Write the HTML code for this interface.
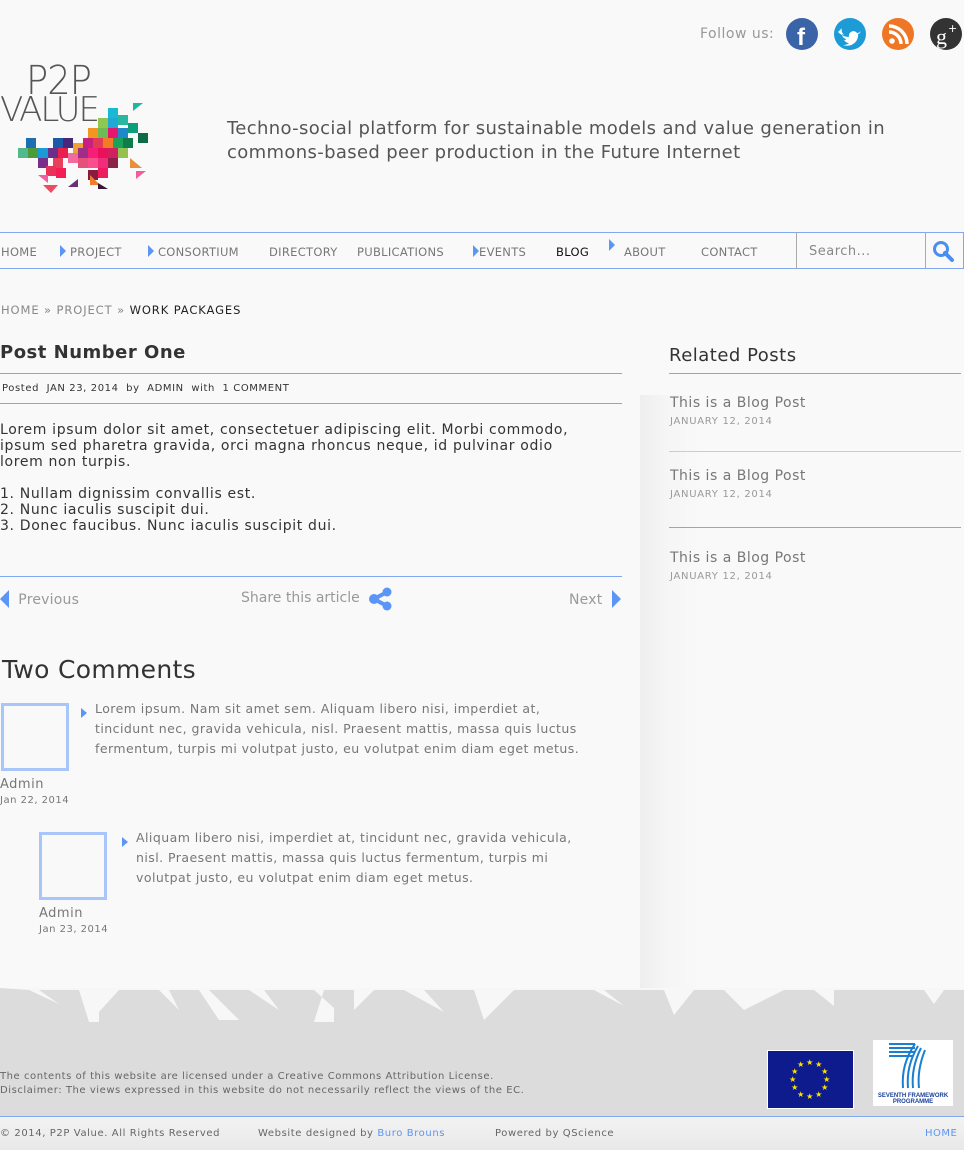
<!DOCTYPE html>
<html><head><meta charset="utf-8"><style>
*{margin:0;padding:0;box-sizing:border-box}
body{width:964px;height:1150px;background:#f9f9f9;font-family:"DejaVu Sans",Verdana,sans-serif;color:#444;position:relative;overflow:hidden;letter-spacing:.5px}
.a{position:absolute;white-space:nowrap}
.nav{font-size:11.5px;color:#777;top:245px;letter-spacing:.3px}
.tri{display:inline-block;width:0;height:0;border-top:6px solid transparent;border-bottom:6px solid transparent;border-left:6px solid #5b95f5}
.hr{position:absolute;height:1px;background:#7fa8f0}
</style></head><body>
<div class="a" style="left:640px;top:395px;width:324px;height:600px;background:linear-gradient(90deg,#eeeeee 0,#f5f5f5 25px,#f9f9f9 60px)"></div>

<div class="a" style="left:700px;top:26px;font-size:14px;color:#999">Follow us:</div>
<svg class="a" style="left:785px;top:17px" width="180" height="34">
<circle cx="17" cy="17" r="16" fill="#3b64a8"/><text x="12" y="28" font-size="24" font-weight="bold" fill="#fff" font-family="Liberation Sans">f</text>
<circle cx="65" cy="17" r="16" fill="#1d9bd7"/><path d="M53 13c3 3 7 5 11 5-1-5 5-8 8-4 2 0 3-1 4-2-1 2-2 3-3 3 1 7-6 14-15 11 3 0 5-1 6-2-3 0-4-2-5-3 1 0 2 0 2-1-3-1-4-3-4-5 1 1 2 1 2 1-2-2-3-5-2-7z" fill="#fff" transform="translate(0,2)"/>
<circle cx="113" cy="17" r="16" fill="#ee7624"/><circle cx="107" cy="24" r="2.8" fill="#fff"/><path d="M104 15a12 12 0 0 1 12 12M104 9a18 18 0 0 1 18 18" stroke="#fff" stroke-width="3.5" fill="none"/>
<circle cx="161" cy="17" r="16" fill="#333"/><text x="151" y="27" font-size="22" fill="#fff" font-family="Liberation Serif">g</text><text x="163" y="15" font-size="11" fill="#fff">+</text>
</svg>

<div class="a" style="left:26px;top:58px;font-size:40px;color:#555;font-family:'DejaVu Sans';font-weight:200;letter-spacing:-1px;transform:scaleX(.92);transform-origin:left">P2P</div>
<div class="a" style="left:0;top:90px;font-size:34px;color:#555;font-family:'DejaVu Sans';letter-spacing:-2px;font-weight:200">VALUE</div>
<svg class="a" style="left:18px;top:103px" width="150" height="92">
<g>
<rect x="90" y="5" width="10" height="10" fill="#1ab9d3"/><rect x="100" y="12" width="10" height="10" fill="#28b7a0"/><rect x="110" y="20" width="10" height="10" fill="#0a9f7a"/><rect x="80" y="15" width="10" height="10" fill="#8fc751"/><rect x="90" y="15" width="10" height="10" fill="#20a9d4"/>
<rect x="70" y="25" width="10" height="10" fill="#f39521"/><rect x="80" y="25" width="10" height="10" fill="#6cbb55"/><rect x="90" y="25" width="10" height="10" fill="#e4166f"/><rect x="100" y="25" width="10" height="10" fill="#1e88c8"/><rect x="120" y="30" width="10" height="10" fill="#0d6b46"/>
<rect x="8" y="35" width="10" height="10" fill="#1e6fb1"/><rect x="35" y="35" width="10" height="10" fill="#1a5aa8"/><rect x="45" y="35" width="10" height="10" fill="#46287a"/><rect x="55" y="40" width="10" height="10" fill="#f0a033"/><rect x="65" y="35" width="10" height="10" fill="#c8207e"/><rect x="75" y="35" width="10" height="10" fill="#e33b53"/><rect x="85" y="35" width="10" height="10" fill="#f47b26"/><rect x="95" y="35" width="10" height="10" fill="#1ba25a"/><rect x="105" y="35" width="10" height="10" fill="#0f7c49"/>
<rect x="0" y="45" width="10" height="10" fill="#52b98d"/><rect x="10" y="45" width="10" height="10" fill="#4b9b3b"/><rect x="20" y="45" width="10" height="10" fill="#1a9ad6"/><rect x="30" y="45" width="10" height="10" fill="#6b2f8a"/><rect x="40" y="45" width="10" height="10" fill="#ea1f4e"/><rect x="50" y="50" width="10" height="10" fill="#f56a9e"/><rect x="60" y="45" width="10" height="10" fill="#9f2e8b"/><rect x="70" y="45" width="10" height="10" fill="#f51e78"/><rect x="80" y="45" width="10" height="10" fill="#e8115a"/><rect x="90" y="45" width="10" height="10" fill="#d02060"/><rect x="100" y="45" width="10" height="10" fill="#95c151"/>
<rect x="20" y="55" width="10" height="10" fill="#7a2e8b"/><rect x="35" y="55" width="10" height="10" fill="#e93f5a"/><rect x="60" y="55" width="10" height="10" fill="#e55178"/><rect x="70" y="55" width="10" height="10" fill="#fa4f8e"/><rect x="80" y="55" width="10" height="10" fill="#f02d7a"/><rect x="90" y="55" width="10" height="10" fill="#8d2248"/>
<rect x="28" y="63" width="10" height="10" fill="#e9325a"/><rect x="38" y="65" width="10" height="10" fill="#f21e55"/><rect x="80" y="65" width="10" height="10" fill="#ee1c5f"/><rect x="70" y="67" width="10" height="10" fill="#8b1b3e"/>
<path d="M25 88h15l-7 8z" fill="#ea4e62" transform="translate(0,-6)"/><path d="M72 72l10 10h-10z" fill="#f07d2c"/><path d="M80 80l10 6h-10z" fill="#3a1633"/><path d="M20 72l10 0 0 8z" fill="#f0609a"/><path d="M112 55l12 10h-12z" fill="#e98f3c"/><path d="M118 68l10 0-10 8z" fill="#ef5f9a"/><path d="M50 84l10-8 0 8z" fill="#6b2f7a"/><path d="M115 0l10 0-10 8z" fill="#1ab9a0"/>
</g></svg>

<div class="a" style="left:227px;top:117px;font-size:18px;color:#555;line-height:24px;white-space:normal;width:700px;letter-spacing:.35px">Techno-social platform for sustainable models and value generation in commons-based peer production in the Future Internet</div>

<div class="hr" style="left:0;top:232px;width:964px"></div>
<div class="hr" style="left:0;top:268px;width:964px"></div>
<div class="a" style="left:796px;top:232px;width:1px;height:37px;background:#aaa"></div>
<div class="a" style="left:925px;top:232px;width:1px;height:37px;background:#aaa"></div>
<div class="a" style="left:963px;top:232px;width:1px;height:37px;background:#7fa8f0"></div>
<div class="a nav" style="left:1px">HOME</div>
<div class="a nav" style="left:60px"><span class="tri" style="vertical-align:-1px"></span> PROJECT</div>
<div class="a nav" style="left:148px"><span class="tri" style="vertical-align:-1px"></span> CONSORTIUM</div>
<div class="a nav" style="left:269px">DIRECTORY</div>
<div class="a nav" style="left:357px">PUBLICATIONS</div>
<div class="a nav" style="left:473px"><span class="tri" style="vertical-align:-1px"></span>EVENTS</div>
<div class="a nav" style="left:556px;color:#111">BLOG</div>
<div class="a" style="left:609px;top:236px"><span class="tri"></span></div>
<div class="a nav" style="left:624px">ABOUT</div>
<div class="a nav" style="left:701px">CONTACT</div>
<div class="a" style="left:809px;top:244px;font-size:13px;color:#888">Search...</div>
<svg class="a" style="left:932px;top:240px" width="24" height="24"><circle cx="9" cy="9" r="6.5" stroke="#4a8ef0" stroke-width="3" fill="none"/><path d="M13 13l7 7" stroke="#4a8ef0" stroke-width="4" stroke-linecap="round"/></svg>

<div class="a" style="left:1px;top:303px;font-size:11.5px;color:#888;letter-spacing:.9px">HOME » PROJECT » <span style="color:#222">WORK PACKAGES</span></div>

<div class="a" style="left:0;top:342px;font-size:18px;font-weight:bold;color:#333">Post Number One</div>
<div class="hr" style="left:0;top:373px;width:622px"></div>
<div class="a" style="left:2px;top:383px;font-size:10px;color:#333;letter-spacing:.6px">Posted &nbsp;JAN 23, 2014 &nbsp;by &nbsp;ADMIN &nbsp;with &nbsp;1 COMMENT</div>
<div class="hr" style="left:0;top:403px;width:622px"></div>
<div class="a" style="left:0;top:422px;font-size:14px;color:#333;line-height:16px;white-space:normal;width:600px;letter-spacing:.65px">Lorem ipsum dolor sit amet, consectetuer adipiscing elit. Morbi commodo, ipsum sed pharetra gravida, orci magna rhoncus neque, id pulvinar odio lorem non turpis.<br><br>1. Nullam dignissim convallis est.<br>2. Nunc iaculis suscipit dui.<br>3. Donec faucibus. Nunc iaculis suscipit dui.</div>

<div class="hr" style="left:0;top:576px;width:622px"></div>
<div class="a" style="left:0;top:590px;font-size:14px;color:#999;letter-spacing:.2px"><span class="tri" style="border-left:0;border-right:9px solid #5b95f5;border-top-width:9px;border-bottom-width:9px;vertical-align:-4px"></span> &nbsp;Previous</div>
<div class="a" style="left:241px;top:590px;font-size:14px;color:#999;letter-spacing:0">Share this article</div>
<svg class="a" style="left:369px;top:587px" width="25" height="25"><g fill="#5b95f5"><circle cx="5" cy="12" r="5"/><circle cx="18" cy="5" r="4.5"/><circle cx="18" cy="19" r="4.5"/></g><path d="M5 12L18 5M5 12l13 7" stroke="#5b95f5" stroke-width="4"/></svg>
<div class="a" style="left:569px;top:590px;font-size:14px;color:#999;letter-spacing:.2px">Next &nbsp;<span class="tri" style="border-left-width:9px;border-top-width:9px;border-bottom-width:9px;vertical-align:-4px"></span></div>

<div class="a" style="left:2px;top:655px;font-size:25px;color:#333;letter-spacing:.3px">Two Comments</div>
<div class="a" style="left:1px;top:703px;width:68px;height:68px;border:3px solid #a9c6fb"></div>
<div class="a" style="left:81px;top:703px"><span class="tri" style="border-left-width:6px;border-top-width:5px;border-bottom-width:5px"></span></div>
<div class="a" style="left:95px;top:699px;font-size:12.5px;color:#777;line-height:20px;white-space:normal;width:500px;letter-spacing:.45px">Lorem ipsum. Nam sit amet sem. Aliquam libero nisi, imperdiet at, tincidunt nec, gravida vehicula, nisl. Praesent mattis, massa quis luctus fermentum, turpis mi volutpat justo, eu volutpat enim diam eget metus.</div>
<div class="a" style="left:0;top:777px;font-size:13px;color:#777">Admin</div>
<div class="a" style="left:0;top:795px;font-size:10px;color:#777">Jan 22, 2014</div>

<div class="a" style="left:39px;top:832px;width:68px;height:68px;border:3px solid #a9c6fb"></div>
<div class="a" style="left:122px;top:832px"><span class="tri" style="border-left-width:6px;border-top-width:5px;border-bottom-width:5px"></span></div>
<div class="a" style="left:136px;top:828px;font-size:12.5px;color:#777;line-height:20px;white-space:normal;width:460px;letter-spacing:.45px">Aliquam libero nisi, imperdiet at, tincidunt nec, gravida vehicula, nisl. Praesent mattis, massa quis luctus fermentum, turpis mi volutpat justo, eu volutpat enim diam eget metus.</div>
<div class="a" style="left:39px;top:906px;font-size:13px;color:#777">Admin</div>
<div class="a" style="left:39px;top:924px;font-size:10px;color:#777">Jan 23, 2014</div>

<div class="a" style="left:669px;top:345px;font-size:18px;color:#333">Related Posts</div>
<div class="hr" style="left:669px;top:373px;width:292px"></div>
<div class="a" style="left:670px;top:395px;font-size:14px;color:#777">This is a Blog Post</div>
<div class="a" style="left:670px;top:416px;font-size:10px;color:#999;letter-spacing:.7px">JANUARY 12, 2014</div>
<div class="a" style="left:669px;top:451px;width:292px;height:1px;background:#ccc"></div>
<div class="a" style="left:670px;top:468px;font-size:14px;color:#777">This is a Blog Post</div>
<div class="a" style="left:670px;top:489px;font-size:10px;color:#999;letter-spacing:.7px">JANUARY 12, 2014</div>
<div class="hr" style="left:669px;top:527px;width:292px"></div>
<div class="a" style="left:670px;top:550px;font-size:14px;color:#777">This is a Blog Post</div>
<div class="a" style="left:670px;top:571px;font-size:10px;color:#999;letter-spacing:.7px">JANUARY 12, 2014</div>

<svg class="a" style="left:0;top:988px" width="964" height="128"><rect x="0" y="0" width="964" height="128" fill="#dcdcdc"/>
<path fill="#f7f7f7" d="M0 0h964v2l-20 0-10 14-10-14-90 0 0 16-20-16-30 0-40 20-20-20-30 0-20 25-10-25-60 0 20 16-30-16-80 0-30 30-10-30-50 0 20 22-40-22-30 0-20 20 0-20-40 0 20 18 0 14-20 0 10-32-60 0 15 20-30-20-40 0 30 30-20 0-20-30-30 0 10 20-20-20-40 0-20 22 0 10-10 0-10-32-40 0 20 14-30-14z"/></svg>
<div class="a" style="left:0;top:1070px;font-size:10px;color:#666;line-height:14px;letter-spacing:.55px">The contents of this website are licensed under a Creative Commons Attribution License.<br>Disclaimer: The views expressed in this website do not necessarily reflect the views of the EC.</div>
<svg class="a" style="left:767px;top:1050px" width="87" height="59"><rect width="87" height="59" fill="#fff"/><rect x="1" y="1" width="85" height="57" fill="#0d1b8c"/><g fill="#ffe300" font-size="8" text-anchor="middle"><text x="43" y="15">★</text><text x="52" y="17">★</text><text x="58" y="24">★</text><text x="60" y="32">★</text><text x="58" y="40">★</text><text x="52" y="47">★</text><text x="43" y="49">★</text><text x="34" y="47">★</text><text x="28" y="40">★</text><text x="26" y="32">★</text><text x="28" y="24">★</text><text x="34" y="17">★</text></g></svg>
<svg class="a" style="left:873px;top:1040px" width="80" height="66"><rect width="80" height="66" fill="#fff"/><g stroke="#1a7fd0" stroke-width="2" fill="none"><path d="M16 4h26M16 8h26M16 12h26M16 16h24"/><path d="M42 4q-14 20-12 44M45 6q-12 20-10 42M48 8q-10 20-8 40M52 10q-8 20-6 38"/></g><text x="40" y="57" font-size="6" fill="#1a3f9a" text-anchor="middle" font-family="Liberation Sans" font-weight="bold" letter-spacing="0">SEVENTH FRAMEWORK</text><text x="40" y="63" font-size="6" fill="#1a3f9a" text-anchor="middle" font-family="Liberation Sans" font-weight="bold" letter-spacing="0">PROGRAMME</text></svg>
<div class="hr" style="left:0;top:1116px;width:964px"></div>
<div class="a" style="left:0;top:1117px;width:964px;height:33px;background:linear-gradient(#f3f3f3,#e8e8e8)"></div>
<div class="a" style="left:0;top:1128px;font-size:10px;color:#666;letter-spacing:.6px">© 2014, P2P Value. All Rights Reserved</div>
<div class="a" style="left:258px;top:1128px;font-size:10px;color:#666;letter-spacing:.6px">Website designed by <span style="color:#5b95f5">Buro Brouns</span></div>
<div class="a" style="left:495px;top:1128px;font-size:10px;color:#666;letter-spacing:.6px">Powered by QScience</div>
<div class="a" style="left:925px;top:1128px;font-size:10px;color:#5b95f5">HOME</div>
</body></html>
